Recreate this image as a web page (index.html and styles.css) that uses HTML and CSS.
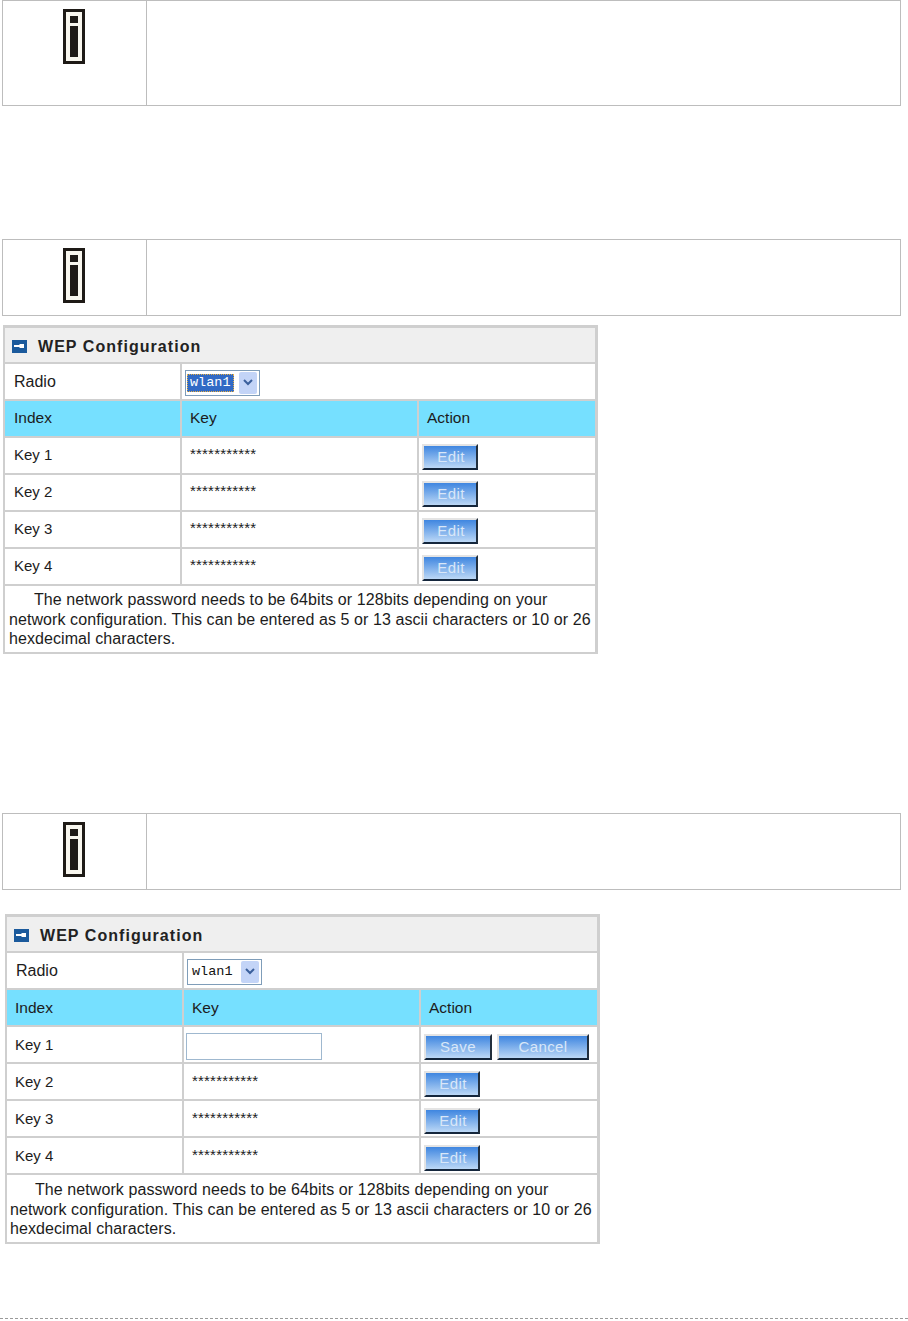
FILE: index.html
```html
<!DOCTYPE html>
<html lang="en">
<head>
<meta charset="utf-8">
<title>WEP Configuration</title>
<link rel="stylesheet" href="styles.css">
</head>
<body>
<div class="page">
  <div class="note note-tall">
    <div class="note-icon">
      <svg class="info" width="22" height="55" viewBox="0 0 22 55"><rect width="22" height="55" fill="#1e1a16"/><rect x="3" y="3" width="16" height="49" fill="#f8f6ee"/><rect x="7" y="7" width="8" height="7" fill="#1e1a16"/><rect x="7" y="17" width="8" height="31" fill="#1e1a16"/></svg>
    </div>
    <div class="note-body"></div>
  </div>

  <div class="note note-short second">
    <div class="note-icon">
      <svg class="info" width="22" height="55" viewBox="0 0 22 55"><rect width="22" height="55" fill="#1e1a16"/><rect x="3" y="3" width="16" height="49" fill="#f8f6ee"/><rect x="7" y="7" width="8" height="7" fill="#1e1a16"/><rect x="7" y="17" width="8" height="31" fill="#1e1a16"/></svg>
    </div>
    <div class="note-body"></div>
  </div>

  <section class="panel panel-one">
    <div class="title">
      <svg class="title-icon" width="15" height="13" viewBox="0 0 15 13"><rect width="15" height="13" fill="#1b5a9c"/><path d="M2 5h5l1-1h4v4H8L7 7H2z" fill="#fff"/></svg>
      <span>WEP Configuration</span>
    </div>
    <div class="row cols">
      <div class="cell radio-label">Radio</div>
      <div class="cell wide">
        <span class="select"><span class="select-value focused">wlan1</span><span class="select-arrow"><svg width="10" height="7" viewBox="0 0 10 7"><path d="M1 1l4 4 4-4" fill="none" stroke="#3a5f9c" stroke-width="2"/></svg></span></span>
      </div>
    </div>
    <div class="row cols3 head">
      <div class="cell">Index</div><div class="cell">Key</div><div class="cell">Action</div>
    </div>
    <div class="row cols3">
      <div class="cell">Key 1</div><div class="cell stars">***********</div><div class="cell"><button class="btn btn-edit" type="button">Edit</button></div>
    </div>
    <div class="row cols3">
      <div class="cell">Key 2</div><div class="cell stars">***********</div><div class="cell"><button class="btn btn-edit" type="button">Edit</button></div>
    </div>
    <div class="row cols3">
      <div class="cell">Key 3</div><div class="cell stars">***********</div><div class="cell"><button class="btn btn-edit" type="button">Edit</button></div>
    </div>
    <div class="row cols3">
      <div class="cell">Key 4</div><div class="cell stars">***********</div><div class="cell"><button class="btn btn-edit" type="button">Edit</button></div>
    </div>
    <p class="help">The network password needs to be 64bits or 128bits depending on your network configuration. This can be entered as 5 or 13 ascii characters or 10 or 26 hexdecimal characters.</p>
  </section>

  <div class="note note-short third">
    <div class="note-icon">
      <svg class="info" width="22" height="55" viewBox="0 0 22 55"><rect width="22" height="55" fill="#1e1a16"/><rect x="3" y="3" width="16" height="49" fill="#f8f6ee"/><rect x="7" y="7" width="8" height="7" fill="#1e1a16"/><rect x="7" y="17" width="8" height="31" fill="#1e1a16"/></svg>
    </div>
    <div class="note-body"></div>
  </div>

  <section class="panel panel-two">
    <div class="title">
      <svg class="title-icon" width="15" height="13" viewBox="0 0 15 13"><rect width="15" height="13" fill="#1b5a9c"/><path d="M2 5h5l1-1h4v4H8L7 7H2z" fill="#fff"/></svg>
      <span>WEP Configuration</span>
    </div>
    <div class="row cols">
      <div class="cell radio-label">Radio</div>
      <div class="cell wide">
        <span class="select"><span class="select-value">wlan1</span><span class="select-arrow"><svg width="10" height="7" viewBox="0 0 10 7"><path d="M1 1l4 4 4-4" fill="none" stroke="#3a5f9c" stroke-width="2"/></svg></span></span>
      </div>
    </div>
    <div class="row cols3 head">
      <div class="cell">Index</div><div class="cell">Key</div><div class="cell">Action</div>
    </div>
    <div class="row cols3">
      <div class="cell">Key 1</div><div class="cell"><input class="key-input" type="text" aria-label="Key 1"></div><div class="cell actions"><button class="btn btn-save" type="button">Save</button><button class="btn btn-cancel" type="button">Cancel</button></div>
    </div>
    <div class="row cols3">
      <div class="cell">Key 2</div><div class="cell stars">***********</div><div class="cell"><button class="btn btn-edit" type="button">Edit</button></div>
    </div>
    <div class="row cols3">
      <div class="cell">Key 3</div><div class="cell stars">***********</div><div class="cell"><button class="btn btn-edit" type="button">Edit</button></div>
    </div>
    <div class="row cols3">
      <div class="cell">Key 4</div><div class="cell stars">***********</div><div class="cell"><button class="btn btn-edit" type="button">Edit</button></div>
    </div>
    <p class="help">The network password needs to be 64bits or 128bits depending on your network configuration. This can be entered as 5 or 13 ascii characters or 10 or 26 hexdecimal characters.</p>
  </section>

  <div class="footer-rule"></div>
</div>
</body>
</html>
```
FILE: styles.css
```css
html, body { margin: 0; padding: 0; background: #fff; }
body { font-family: "Liberation Sans", Arial, sans-serif; color: #1c1c1c; }
.page { width: 908px; height: 1321px; overflow: hidden; padding-left: 2px; box-sizing: border-box; }

.note { display: flex; width: 899px; box-sizing: border-box; border: 1px solid #bdbdbd; }
.note-tall { height: 106px; }
.note-short { height: 77px; }
.second { margin-top: 133px; }
.third { margin-top: 159px; }
.note-icon { width: 144px; flex: none; border-right: 1px solid #bdbdbd; display: flex; justify-content: flex-start; align-items: flex-start; padding: 8px 0 0 60px; box-sizing: border-box; }
.info { display: block; }
.note-body { flex: 1; }

.panel { width: 595px; box-sizing: border-box; border: 2px solid #cfcfcf; border-top-width: 3px; border-right-width: 3px; background: #cfcfcf; display: flex; flex-direction: column; gap: 2px; }
.panel-one { margin: 9px 0 0 1px; height: 329px; }
.panel-two { margin: 24px 0 0 3px; height: 330px; }

.title { height: 34px; box-sizing: border-box; padding: 3px 0 0 7px; background: #efefef; display: flex; align-items: center; gap: 11px; font-weight: 700; font-size: 16px; letter-spacing: 1.05px; color: #222; }
.title-icon { display: block; flex: none; margin-top: -1px; }

.row { display: grid; height: 35px; gap: 2px; font-size: 15px; }
.cols { grid-template-columns: 175px 1fr; }
.cols3 { grid-template-columns: 175px 235px 1fr; }
.cell { background: #fff; display: flex; align-items: center; padding-left: 9px; box-sizing: border-box; }
.wide { padding-left: 3px; padding-top: 2px; }
.radio-label { font-size: 16px; }
.cols3 .cell:nth-child(2) { padding-left: 8px; }
.head .cell { background: #76e0ff; font-size: 15.5px; }
.panel-one .cols3 .cell:first-child { padding-bottom: 2px; }
.panel-one .head .cell { padding-bottom: 2px; }
.panel-two .cols3 .cell:first-child { padding-left: 8px; }
.stars { font-size: 15px; letter-spacing: 0.2px; }
.panel-one .stars { padding-bottom: 5px; }
.panel-two .stars { padding-bottom: 2px; }
.actions { gap: 5px; }
.cols3 .cell:last-child { padding-left: 8px; }
.cols3 .cell:last-child:has(.btn) { padding-left: 3px; }

.select { display: flex; align-items: center; width: 75px; height: 26px; box-sizing: border-box; border: 1px solid #7f9db9; background: #fff; padding: 0 2px 0 1px; justify-content: space-between; }
.select-value { font-family: "Liberation Mono", monospace; font-size: 13.5px; color: #111; padding: 0 2px; border: 1px solid transparent; line-height: 16px; }
.select-value.focused { background: #316ac5; color: #fff; border: 1px dotted #e8b040; }
.select-arrow { width: 18px; height: 22px; background: #c3d4f7; border-radius: 2px; display: flex; align-items: center; justify-content: center; }
.select-arrow svg { display: block; }

.key-input { width: 136px; height: 27px; box-sizing: border-box; border: 1px solid #9fb8cf; background: #fff; padding: 0; margin: 4px 0 0; }
.panel-two .cols3 .cell:nth-child(2):has(.key-input) { padding-left: 2px; }

.btn { height: 26px; padding: 0; margin: 2px 0 0; box-sizing: border-box; border: 2px solid; border-color: #e4e4e4 #222f3d #14263c #e4e4e4; background: linear-gradient(#3f86e0, #bcd8f6); color: #d9e7f8; font-family: "Liberation Sans", Arial, sans-serif; font-size: 15px; letter-spacing: 0.4px; line-height: 1; }
.panel-two .btn { margin-top: 4px; }
.btn-edit { width: 56px; padding-left: 2px; }
.btn-save { width: 68px; }
.btn-cancel { width: 92px; }

.help { flex: 1; margin: 0; background: #fff; padding: 4px 2px 0 4px; font-size: 16px; letter-spacing: 0.08px; line-height: 19.5px; text-indent: 25px; }
.panel-two .help { padding: 5px 2px 0 3px; }

.footer-rule { margin: 74px 0 0 -2px; width: 908px; border-top: 1px dashed #9a9a9a; }
```
